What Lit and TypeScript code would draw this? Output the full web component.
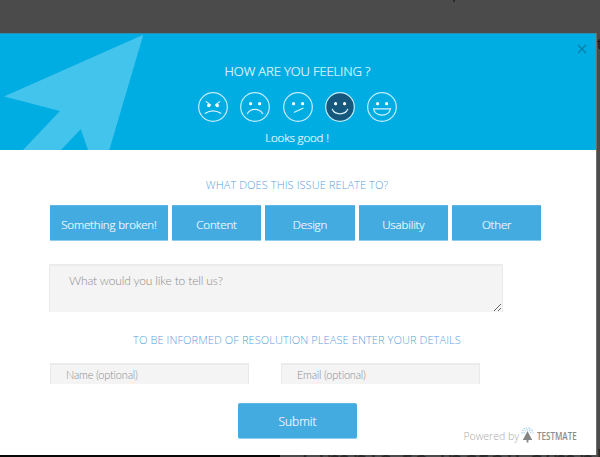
import { LitElement, html, css, svg } from "lit";
import { customElement, property, state } from "lit/decorators.js";
import { classMap } from "lit/directives/class-map.js";

const eyes = svg`<circle cx="10.6" cy="11.7" r="1.6" fill="#fff"/><circle cx="19.6" cy="11.7" r="1.6" fill="#fff"/>`;
const faces = [
  svg`<path d="M8.3 9.6L12.6 13M21.7 9.6L17.4 13" class="line"/><circle cx="10.7" cy="13.5" r="1.7" fill="#fff"/><circle cx="19.3" cy="13.5" r="1.7" fill="#fff"/><path d="M7.2 21.3Q15 16.4 22.8 21.3" class="line"/>`,
  svg`${eyes}<path d="M7.3 21.8C10.4 15.9 19.6 15.9 22.7 21.8" class="line"/>`,
  svg`${eyes}<path d="M11.3 20.2L20 16.2" class="line"/>`,
  svg`${eyes}<path d="M7.3 17.3C9.8 23.3 20.2 23.3 22.7 17.3" class="line"/>`,
  svg`${eyes}<path d="M6.6 16.9H23.4C22.4 25.2 7.6 25.2 6.6 16.9Z" class="line"/>`,
];

@customElement("feeling-face")
class FeelingFace extends LitElement {
  @property({ type: Number }) mood = 0;
  @property({ type: Boolean }) active = false;
  static styles = css`
    :host { display: block; width: 30px; height: 30px; cursor: pointer; }
    svg { display: block; }
    .ring { fill: none; stroke: #c4edfb; stroke-width: 1.2; }
    .ring.active { fill: #15577d; }
    .line { fill: none; stroke: #d8f3fd; stroke-width: 1.2; stroke-linecap: round; }
  `;
  render() {
    return html`<svg width="30" height="30" viewBox="0 0 30 30">
      <circle class=${classMap({ ring: true, active: this.active })} cx="15" cy="15" r="14.3" />
      ${faces[this.mood]}
    </svg>`;
  }
}

@customElement("app-root")
class AppRoot extends LitElement {
  @state() private mood = 3;
  static styles = css`
    :host { display: block; position: relative; width: 600px; height: 457px; overflow: hidden; background: #4b4b4b; font-family: "Open Sans", sans-serif; font-weight: 300; }
    * { box-sizing: border-box; }
    .page-strip { position: absolute; left: 0; top: 450px; width: 280px; height: 7px; background: #090a07; }
    .page-text { position: absolute; left: 302px; top: 442px; font: 400 27px/36px "Open Sans", sans-serif; letter-spacing: 1.2px; color: #292929; white-space: nowrap; }
    .page-edge { position: absolute; left: 597px; top: 35px; font: 14px/18px "Open Sans", sans-serif; color: #111; }
    .page-mark { position: absolute; left: 453px; top: 0; width: 2px; height: 2px; background: #292929; }
    .modal { position: relative; width: 597px; height: 422px; margin-top: 33px; border-right: 1px solid #707070; background: #fff; display: flex; flex-direction: column; }
    :host::before { content: ""; display: table; }
    header { position: relative; height: 117px; background: #00ade3; border-top: 1px solid #288fb0; color: #e9f8fe; display: flex; flex-direction: column; align-items: center; padding-top: 26px; flex: none; padding-right: 0; }
    .arrow { position: absolute; left: 0; top: 0; }
    .close { position: absolute; right: 9px; top: 10px; }
    h1 { margin: 0; font-size: 13px; line-height: 22px; font-weight: 300; white-space: nowrap; letter-spacing: -.12px; -webkit-text-stroke: .2px; padding-right: 1px; }
    .faces { display: flex; gap: 12.2px; margin-top: 10px; padding-right: 1px; }
    .mood { font-size: 11.5px; line-height: 16px; margin-top: 8px; letter-spacing: -.15px; -webkit-text-stroke: .2px; padding-right: 2px; }
    form { display: flex; flex-direction: column; padding-left: 49px; }
    h2 { margin: 0; font-size: 11px; line-height: 16px; font-weight: 300; color: #5b9fdc; text-align: center; white-space: nowrap; width: 496px; letter-spacing: .1px; }
    .relate { margin-top: 27px; }
    .choices { display: flex; gap: 4.2px; margin-top: 12px; padding-left: 1px; }
    .choice, .submit { border: 0; padding: 0; margin: 0; background: #44abe1; color: #f0f9fe; font: 300 11.5px/16px "Open Sans", sans-serif; height: 36px; width: 89.2px; padding: 3px 0 0 0; border-top: 1px solid #60b8e6; border-bottom: 1px solid #8fcdee; letter-spacing: -.14px; -webkit-text-stroke: .2px; }
    .choice.wide { width: 117.8px; letter-spacing: -.15px; }
    .field { display: block; margin: 0; border: 1px solid #e9e9e9; border-top: 2px solid #ebebeb; border-bottom: 0; background: #f4f4f4; border-radius: 0; outline: 0; font: 300 11px/16px Lato, sans-serif; letter-spacing: -.2px; }
    .field::placeholder { color: #8c8c8c; opacity: 1; }
    .message { width: 454px; height: 48px; margin-top: 23px; padding: 7px 19px; resize: both; font-size: 12px; line-height: 16px; letter-spacing: -.16px; overflow: hidden; }
    .informed { margin-top: 20px; }
    .details { display: flex; gap: 32px; margin-top: 15px; padding-left: 1px; }
    .detail { width: 199px; height: 21px; padding: 0 15px; }
    .submit { width: 119px; margin: 19px 0 0 189px; border-radius: 2px; font-size: 12px; letter-spacing: -.05px; padding: 1px 0 0; }
    .powered { position: absolute; right: 19px; bottom: 9px; height: 20px; display: flex; align-items: center; color: #aaa; font-size: 10.5px; white-space: nowrap; }
    .tree { margin: -3px 3px 0 2px; }
    .brand { font: 600 11px/16px "Open Sans", sans-serif; color: #8b8b8b; width: 40px; display: block; }
    .brand span { display: inline-block; transform: scaleX(.73); transform-origin: left; }
  `;
  render() {
    return html`
      <div class="page-strip"></div>
      <div class="page-text">Simple to install simple to</div>
      <div class="page-edge">t</div>
      <div class="page-mark"></div>
      <section class="modal">
        <header>
          <svg class="arrow" width="150" height="116" viewBox="0 34 150 116"><path fill="#43c4ec" d="M143.3 34.8L4 96.5L60 111L23 150H61L80.7 129.3L88 150H109.3Z"/></svg>
          <svg class="close" width="10" height="10" viewBox="0 0 10 10"><path d="M1 1L9 9M9 1L1 9" stroke="#087fa9" stroke-width="1.2" fill="none"/></svg>
          <h1>HOW ARE YOU FEELING ?</h1>
          <div class="faces">${[0, 1, 2, 3, 4].map((i) => html`<feeling-face .mood=${i} .active=${i === this.mood} @click=${() => (this.mood = i)}></feeling-face>`)}</div>
          <div class="mood">Looks good !</div>
        </header>
        <form @submit=${(e: Event) => e.preventDefault()}>
          <h2 class="relate">WHAT DOES THIS ISSUE RELATE TO?</h2>
          <div class="choices">${["Something broken!", "Content", "Design", "Usability", "Other"].map((t, i) => html`<button type="button" class=${classMap({ choice: true, wide: i === 0 })}>${t}</button>`)}</div>
          <textarea class="field message" placeholder="What would you like to tell us?"></textarea>
          <h2 class="informed">TO BE INFORMED OF RESOLUTION PLEASE ENTER YOUR DETAILS</h2>
          <div class="details">
            <input class="field detail" placeholder="Name (optional)" />
            <input class="field detail" placeholder="Email (optional)" />
          </div>
          <button class="submit">Submit</button>
        </form>
        <div class="powered">Powered by
          <svg class="tree" width="13" height="16" viewBox="0 0 13 16"><path d="M6.5 4L11.2 13H7.4V15.5H5.6V13H1.8Z" fill="#858585"/><path d="M1 6.5Q1.5 1 6.5 1Q11.5 1 12 6.5M3 6.5Q3.5 3 6.5 2.8Q9.5 3 10 6.5" fill="none" stroke="#9fcde8" stroke-width="1.2" stroke-dasharray="1.3 1"/></svg>
          <div class="brand"><span>TESTMATE</span></div>
        </div>
      </section>
    `;
  }
}
